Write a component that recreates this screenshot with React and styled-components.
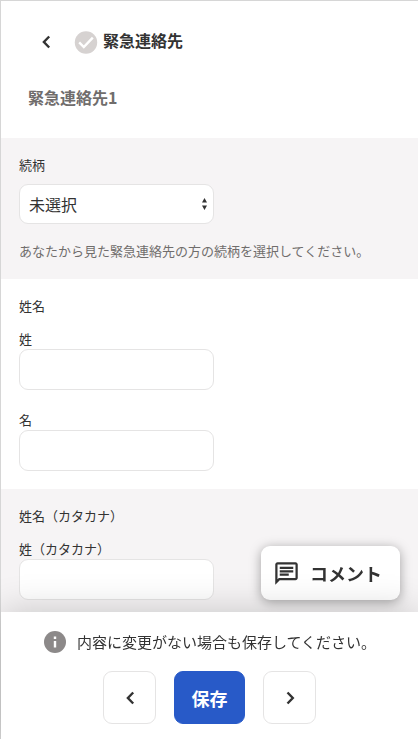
import React from 'react';
import styled, { createGlobalStyle } from 'styled-components';

const GlobalStyle = createGlobalStyle`
  * {
    box-sizing: border-box;
  }

  body {
    margin: 0;
    background-color: #fff;
    color: #333;
    font-family: "Noto Sans CJK JP", sans-serif;
  }

  button, input, select {
    font-family: inherit;
    color: inherit;
  }
`;

const Page = styled.div`
  display: flex;
  flex-direction: column;
  min-height: 100vh;
  border-top: 1px solid #d6d6d6;
  border-left: 1px solid #d6d6d6;
`;

const Header = styled.header`
  padding: 28px 27px 29px;
`;

const TitleRow = styled.div`
  display: flex;
  align-items: center;
  height: 26px;
`;

const BackLink = styled.a`
  display: flex;
  margin: 0 16px 0 6px;
  color: #333;
`;

const Title = styled.h1`
  margin: 0 0 4px 5px;
  font-size: 16px;
  line-height: 24px;
`;

const SubTitle = styled.h2`
  margin: 30px 0 0;
  font-size: 16px;
  line-height: 24px;
  color: #706d6c;
`;

const Form = styled.form`
  display: flex;
  flex: 1;
  flex-direction: column;
`;

const Section = styled.section`
  padding: 17px 18px 18px;
  background-color: ${({ $shaded }) => ($shaded ? '#f6f4f5' : '#fff')};

  &:last-child {
    flex: 1;
    padding-bottom: 12px;
  }
`;

const Label = styled.label`
  display: block;
  font-size: 13px;
  line-height: 20px;
`;

const GroupLabel = styled.h3`
  margin: 0 0 13px;
  font-size: 13px;
  font-weight: normal;
  line-height: 20px;
`;

const Field = styled.div`
  & + & {
    margin-top: 20px;
  }
`;

const TextInput = styled.input`
  display: block;
  width: 195px;
  max-width: 100%;
  height: 41px;
  padding: 0 9px;
  border: 1px solid #e5e4e4;
  border-radius: 9px;
  background-color: #fff;
  font-size: 16px;
`;

const SelectBox = styled.div`
  position: relative;
  width: 195px;
  max-width: 100%;
  margin: 9px 0 17px;

  svg {
    position: absolute;
    top: 14px;
    right: 6px;
    pointer-events: none;
  }
`;

const Select = styled.select`
  display: block;
  width: 100%;
  height: 40px;
  padding: 0 9px;
  border: 1px solid #e5e4e4;
  border-radius: 9px;
  background-color: #fff;
  font-size: 16px;
  appearance: none;
`;

const Help = styled.p`
  margin: 0;
  font-size: 13px;
  line-height: 20px;
  color: #706d6c;
`;

const CommentButton = styled.button`
  position: fixed;
  right: 18px;
  bottom: 139px;
  display: flex;
  align-items: center;
  gap: 10px;
  height: 54px;
  padding: 0 18px 0 12px;
  border: 0;
  border-radius: 9px;
  background-color: #fff;
  box-shadow: 0 2px 12px rgba(0, 0, 0, 0.35);
  font-size: 18px;
  font-weight: bold;
`;

const Footer = styled.footer`
  position: sticky;
  bottom: 0;
  padding: 17px 18px 16px;
  background-color: #fff;
  box-shadow: 0 0 36px rgba(0, 0, 0, 0.2);
`;

const Notice = styled.p`
  display: flex;
  align-items: center;
  justify-content: center;
  gap: 10px;
  margin: 0 0 16px;
  font-size: 15px;
  line-height: 26px;
  white-space: nowrap;
`;

const Actions = styled.div`
  display: flex;
  justify-content: center;
  gap: 18px;
`;

const Button = styled.button`
  display: flex;
  align-items: center;
  justify-content: center;
  width: ${({ $primary }) => ($primary ? '71px' : '53px')};
  height: 53px;
  padding: 0;
  border: 1px solid ${({ $primary }) => ($primary ? '#285ac8' : '#e5e4e4')};
  border-radius: 9px;
  background-color: ${({ $primary }) => ($primary ? '#285ac8' : '#fff')};
  color: ${({ $primary }) => ($primary ? '#fff' : '#333')};
  font-size: 18px;
  font-weight: bold;
`;

const Chevron = ({ next }) => (
  <svg width="24" height="24" viewBox="0 0 24 24" fill="none" stroke="currentColor" strokeWidth="2.4" aria-hidden="true">
    <path d={next ? 'M9.5 6.5l5.3 5.5-5.3 5.5' : 'M15.2 6.5L9.9 12l5.3 5.5'} />
  </svg>
);

const CheckIcon = () => (
  <svg width="24" height="24" viewBox="0 0 24 24" aria-hidden="true">
    <circle cx="12" cy="12.5" r="11.2" fill="#d6d2d1" />
    <path d="M5.2 12.4l4.6 4.6 9-9.4" fill="none" stroke="#fff" strokeWidth="2.4" />
  </svg>
);

const InfoIcon = () => (
  <svg width="24" height="24" viewBox="0 0 24 24" aria-hidden="true">
    <circle cx="12" cy="12" r="11" fill="#8c8989" />
    <path d="M10.8 6.5h2.4v2.4h-2.4zM10.8 11h2.4v6.5h-2.4z" fill="#fff" />
  </svg>
);

const CommentIcon = () => (
  <svg width="27" height="27" viewBox="0 0 24 24" fill="currentColor" aria-hidden="true">
    <path d="M4 4h16v12H5.17L4 17.17V4m0-2c-1.1 0-1.99.9-1.99 2L2 22l4-4h14c1.1 0 2-.9 2-2V4c0-1.1-.9-2-2-2H4zm2 10h8v2H6v-2zm0-3h12v2H6V9zm0-3h12v2H6V6z" />
  </svg>
);

const SelectArrows = () => (
  <svg width="7" height="12" viewBox="0 0 7 12" fill="#333" aria-hidden="true">
    <path d="M3.5 0L6 4.5H1zM3.5 12L1 7.5h5z" />
  </svg>
);

const TextField = ({ id, label }) => (
  <Field>
    <Label htmlFor={id}>{label}</Label>
    <TextInput id={id} name={id} type="text" />
  </Field>
);

const App = () => (
  <>
    <GlobalStyle />
    <Page>
      <Header>
        <TitleRow>
          <BackLink href="#" aria-label="戻る"><Chevron /></BackLink>
          <CheckIcon />
          <Title>緊急連絡先</Title>
        </TitleRow>
        <SubTitle>緊急連絡先1</SubTitle>
      </Header>

      <Form id="contact">
        <Section $shaded>
          <Label htmlFor="relation">続柄</Label>
          <SelectBox>
            <Select id="relation" name="relation">
              <option>未選択</option>
            </Select>
            <SelectArrows />
          </SelectBox>
          <Help>あなたから見た緊急連絡先の方の続柄を選択してください。</Help>
        </Section>
        <Section>
          <GroupLabel>姓名</GroupLabel>
          <TextField id="lastName" label="姓" />
          <TextField id="firstName" label="名" />
        </Section>
        <Section $shaded>
          <GroupLabel>姓名（カタカナ）</GroupLabel>
          <TextField id="lastNameKana" label="姓（カタカナ）" />
        </Section>
      </Form>

      <CommentButton type="button">
        <CommentIcon />
        コメント
      </CommentButton>

      <Footer>
        <Notice>
          <InfoIcon />
          内容に変更がない場合も保存してください。
        </Notice>
        <Actions>
          <Button type="button" aria-label="前へ"><Chevron /></Button>
          <Button type="submit" form="contact" $primary>保存</Button>
          <Button type="button" aria-label="次へ"><Chevron next /></Button>
        </Actions>
      </Footer>
    </Page>
  </>
);

export default App;
